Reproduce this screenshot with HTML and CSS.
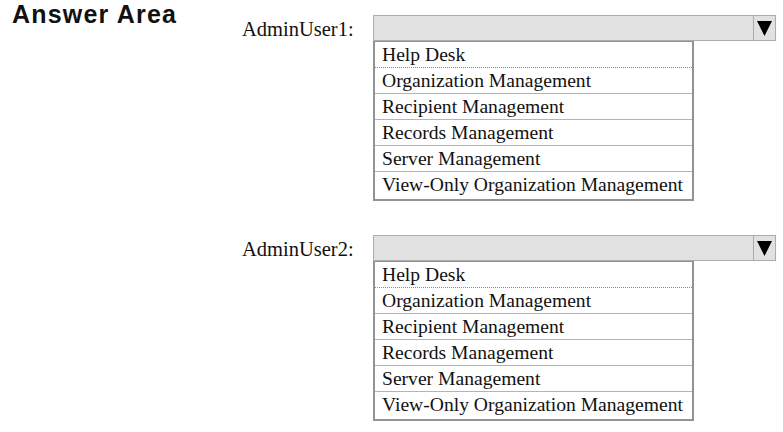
FILE: index.html
```html
<!DOCTYPE html>
<html>
<head>
<meta charset="utf-8">
<link rel="stylesheet" href="styles.css">
</head>
<body>
<div class="page">
  <h1 class="title">Answer Area</h1>
  <div class="questions">
    <div class="q">
      <div class="label">AdminUser1:</div>
      <div class="field">
        <div class="select"><span class="value"></span><span class="btn"><svg width="15" height="15" viewBox="0 0 15 15"><polygon points="0,0 15,0 7.5,15" fill="#000"/></svg></span></div>
        <ul class="options">
          <li class="first">Help Desk</li>
          <li>Organization Management</li>
          <li>Recipient Management</li>
          <li>Records Management</li>
          <li>Server Management</li>
          <li class="last">View-Only Organization Management</li>
        </ul>
      </div>
    </div>
    <div class="q">
      <div class="label">AdminUser2:</div>
      <div class="field">
        <div class="select"><span class="value"></span><span class="btn"><svg width="15" height="15" viewBox="0 0 15 15"><polygon points="0,0 15,0 7.5,15" fill="#000"/></svg></span></div>
        <ul class="options">
          <li class="first">Help Desk</li>
          <li>Organization Management</li>
          <li>Recipient Management</li>
          <li>Records Management</li>
          <li>Server Management</li>
          <li class="last">View-Only Organization Management</li>
        </ul>
      </div>
    </div>
  </div>
</div>
</body>
</html>
```

FILE: styles.css
```css
html, body {
  margin: 0;
  padding: 0;
  background: #fff;
}
.page {
  display: flex;
  padding-left: 12px;
  width: 783px;
  height: 432px;
  box-sizing: border-box;
}
.title {
  margin: 0;
  width: 230px;
  flex: none;
  font-family: "Liberation Sans", Arial, sans-serif;
  font-weight: bold;
  font-size: 25px;
  letter-spacing: 1.2px;
  line-height: 28px;
  color: #111;
}
.questions {
  display: flex;
  flex-direction: column;
  gap: 34px;
  padding-top: 15px;
}
.q {
  display: flex;
  align-items: flex-start;
}
.label {
  width: 131px;
  flex: none;
  font-family: "Liberation Serif", "Times New Roman", serif;
  font-size: 20.5px;
  line-height: 26px;
  padding-top: 1px;
  color: #111;
}
.field {
  display: flex;
  flex-direction: column;
}
.select {
  width: 403px;
  height: 26px;
  box-sizing: border-box;
  border: 1px solid #acacac;
  background: #e1e1e1;
  display: flex;
}
.value {
  flex: 1;
}
.btn {
  width: 21px;
  border-left: 1px solid #acacac;
  display: flex;
  align-items: center;
  justify-content: center;
  padding-top: 1px;
}
.btn svg {
  display: block;
}
.options {
  list-style: none;
  margin: 0;
  padding: 0;
  width: 321px;
  box-sizing: border-box;
  border: 2px solid #939393;
  border-top-width: 1px;
  font-family: "Liberation Serif", "Times New Roman", serif;
  font-size: 19.6px;
  color: #111;
}
.options li {
  height: 25px;
  line-height: 25px;
  padding-left: 7px;
  border-bottom: 1px solid #b4b4b4;
}
.options li.first {
  border-bottom: 1px dotted #8a8a8a;
}
.options li.last {
  border-bottom: none;
  height: 27px;
}
```
